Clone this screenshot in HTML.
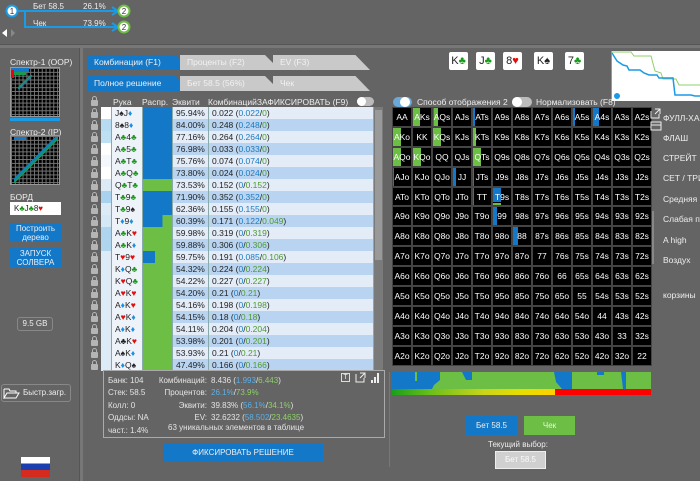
<!DOCTYPE html>
<html><head><meta charset="utf-8"><style>
*{margin:0;padding:0;box-sizing:border-box}
body{width:700px;height:481px;background:#646464;font-family:"Liberation Sans","DejaVu Sans",sans-serif;position:relative;overflow:hidden;color:#eee}
.a{position:absolute}
.t{font-size:8px;white-space:nowrap}
.row{position:absolute;left:89px;width:285px;height:12px;font-size:8.5px;color:#222}
.row>div{position:absolute;top:0;height:12px;border-right:1px solid #8aa;line-height:12px}
.l{left:0;width:12px;background:#646464;border-right:none!important}
.l::after{content:"";position:absolute;left:2px;top:5px;width:7px;height:6px;background:#b5b5b5;border-radius:1px}
.l::before{content:"";position:absolute;left:3px;top:1px;width:5px;height:6px;border:1px solid #b5b5b5;border-radius:3px 3px 0 0;box-sizing:border-box}
.c{left:12px;width:11px}
.h{left:23px;width:31px;padding-left:3px;background:#eef3fa}
.d{left:54px;width:30px}
.e{left:84px;width:36px;padding-left:3px}
.k{left:120px;width:165px;padding-left:3px}
.b{color:#1b7bc4}.g{color:#4d9a2c}.r{color:#e01010}.s{color:#222}.cl{color:#1a9a1a}.dm{color:#1b8fe0}
.grid{position:absolute;left:392px;top:107px;width:260px;height:259px;display:grid;grid-template-columns:repeat(13,20px);grid-template-rows:repeat(13,19.9px);background:#555}
.grid div{background:#000;border:1px solid #444;color:#fff;font-size:8.5px;line-height:18px;text-align:center;position:relative}
.grid i{position:absolute;top:0;bottom:0;left:0}
.grid span{position:relative}
.gb{background:#1478c8}.gg{background:#6cbf44}
.card{position:absolute;top:52px;width:19px;height:18px;background:#fff;border-radius:2px;font-size:11px;color:#222;line-height:18px;text-align:center}
.rl{position:absolute;left:663px;font-size:8.5px;color:#eee;white-space:nowrap}
</style></head><body>
<svg class="a" style="left:0;top:0" width="140" height="40">
<path d="M18 11 H116 M25 11 V27 H116" stroke="#1b9ae6" stroke-width="2" fill="none"/>
<path d="M112 7 L118 11 L112 15 M112 23 L118 27 L112 31" stroke="#1b9ae6" stroke-width="2" fill="none"/>
<circle cx="12" cy="11" r="5.5" fill="#fff" stroke="#1b9ae6" stroke-width="2"/>
<circle cx="124" cy="11" r="5.5" fill="#fff" stroke="#6cbf44" stroke-width="2"/>
<circle cx="124" cy="27" r="5.5" fill="#fff" stroke="#6cbf44" stroke-width="2"/>
<text x="12" y="14" font-size="8" text-anchor="middle" fill="#333">1</text>
<text x="124" y="14" font-size="8" text-anchor="middle" fill="#333">2</text>
<text x="124" y="30" font-size="8" text-anchor="middle" fill="#333">2</text>
<path d="M2 33 L7 29 V37 Z" fill="#fff"/><path d="M11 29 L15 33 L11 37Z" fill="#888"/>
</svg>
<div class="a t" style="left:33px;top:2px">Бет 58.5</div><div class="a t" style="left:83px;top:2px">26.1%</div>
<div class="a t" style="left:33px;top:19px">Чек</div><div class="a t" style="left:83px;top:19px">73.9%</div>
<div class="a" style="left:0;top:44px;width:700px;height:4px;background:#777;border-top:1px solid #555"></div>
<div class="a" style="left:79px;top:48px;width:4px;height:433px;background:#777;border-left:1px solid #555"></div>
<div class="a t" style="left:10px;top:57px;font-size:8.5px">Спектр-1 (OOP)</div>
<div class="a" style="left:10px;top:67px;width:50px;height:50px;background:#000;background-image:linear-gradient(#777 1px,transparent 1px),linear-gradient(90deg,#777 1px,transparent 1px);background-size:3.85px 3.85px;border:1px solid #999"></div>
<div class="a" style="left:11px;top:68px;width:18px;height:4px;background:#1478c8"></div><div class="a" style="left:11px;top:70px;width:3px;height:8px;background:#e01"></div><div class="a" style="left:14px;top:72px;width:12px;height:3px;background:#1a9a4a"></div>
<div class="a" style="left:18px;top:75px;width:14px;height:14px;background:linear-gradient(135deg,transparent 44%,#1a9a4a 44%,#1478c8 56%,transparent 56%)"></div>
<div class="a" style="left:10px;top:118px;width:50px;height:3px;background:#1b9ae6"></div>
<div class="a t" style="left:10px;top:127px;font-size:8.5px">Спектр-2 (IP)</div>
<div class="a" style="left:10px;top:135px;width:50px;height:50px;background:#000;background-image:linear-gradient(#777 1px,transparent 1px),linear-gradient(90deg,#777 1px,transparent 1px);background-size:3.85px 3.85px;border:1px solid #999"></div>
<div class="a" style="left:14px;top:137px;width:44px;height:46px;background:linear-gradient(135deg,transparent 46%,#1478c8 46%,#1a9a4a 52%,transparent 52%)"></div>
<div class="a" style="left:14px;top:137px;width:12px;height:3px;background:#1478c8"></div>
<div class="a t" style="left:10px;top:192px;font-size:8.5px">БОРД</div>
<div class="a" style="left:10px;top:202px;width:51px;height:13px;background:#fff;color:#222;font-size:8px;line-height:13px;padding-left:4px">K<span class="cl">♣</span>J<span class="cl">♣</span>8<span class="r">♥</span></div>
<div class="a" style="left:10px;top:223px;width:51px;height:19px;background:#1478c8;font-size:8px;text-align:center;line-height:9px;padding-top:1px">Построить дерево</div>
<div class="a" style="left:10px;top:248px;width:51px;height:19px;background:#1478c8;font-size:8px;text-align:center;line-height:9px;padding-top:1px">ЗАПУСК СОЛВЕРА</div>
<div class="a" style="left:17px;top:317px;width:36px;height:14px;border:1px solid #888;border-radius:3px;font-size:8px;text-align:center;line-height:12px">9.5 GB</div>
<div class="a" style="left:1px;top:384px;width:70px;height:18px;border:1px solid #888;border-radius:3px;font-size:8px;line-height:16px;padding-left:21px">Быстр.загр.</div>
<svg class="a" style="left:3px;top:387px" width="17" height="12"><path d="M1 2 H6 L7 4 H13 V6 M1 2 V11 L4 6 H16 L13 11 H1" stroke="#fff" fill="none"/></svg>
<div class="a" style="left:21px;top:457px;width:29px;height:20px;background:linear-gradient(#fff 33%,#1c3fb0 33%,#1c3fb0 66%,#d52b1e 66%)"></div>
<div class="a t" style="left:88px;top:55px;width:100px;height:15px;background:#1478c8;clip-path:polygon(0 0,88% 0,100% 100%,0 100%);font-size:8.5px;line-height:15px;padding-left:6px">Комбинации (F1)</div>
<div class="a t" style="left:180px;top:55px;width:100px;height:15px;background:#c9c9c9;clip-path:polygon(0 0,85% 0,100% 100%,0 100%);font-size:8.5px;line-height:15px;padding-left:7px;color:#f2f2f2">Проценты (F2)</div>
<div class="a t" style="left:273px;top:55px;width:97px;height:15px;background:#c9c9c9;clip-path:polygon(0 0,85% 0,100% 100%,0 100%);font-size:8.5px;line-height:15px;padding-left:7px;color:#f2f2f2">EV (F3)</div>
<div class="a t" style="left:88px;top:76px;width:100px;height:15px;background:#1478c8;clip-path:polygon(0 0,88% 0,100% 100%,0 100%);font-size:8.5px;line-height:15px;padding-left:6px">Полное решение</div>
<div class="a t" style="left:180px;top:76px;width:100px;height:15px;background:#c9c9c9;clip-path:polygon(0 0,85% 0,100% 100%,0 100%);font-size:8.5px;line-height:15px;padding-left:7px;color:#f2f2f2">Бет 58.5 (56%)</div>
<div class="a t" style="left:273px;top:76px;width:97px;height:15px;background:#c9c9c9;clip-path:polygon(0 0,85% 0,100% 100%,0 100%);font-size:8.5px;line-height:15px;padding-left:7px;color:#f2f2f2">Чек</div>
<div class="a t" style="left:113px;top:97px;font-size:8.5px">Рука</div>
<div class="a t" style="left:142px;top:97px;font-size:8.5px">Распр.</div>
<div class="a t" style="left:172px;top:97px;font-size:8.5px">Эквити</div>
<div class="a t" style="left:208px;top:97px;font-size:8.5px">КомбинацийЗАФИКСИРОВАТЬ (F9)</div>
<div class="a" style="left:357px;top:97px;width:17px;height:9px;border-radius:5px;background:#bbb"></div><div class="a" style="left:357px;top:97px;width:9px;height:9px;border-radius:5px;background:#fff"></div>
<div class="row" style="top:95px;width:12px"><div class="l"></div></div>
<div class="a" style="left:374px;top:107px;width:9px;height:264px;background:#7a7a7a"></div>
<div class="a" style="left:375px;top:110px;width:7px;height:150px;background:#999"></div>
<div class="row" style="top:107px"><div class="l"></div><div class="c" style="background:#fff"></div><div class="h">J<span class="s">♠</span>J<span class="dm">♦</span></div><div class="d gb"></div><div class="e" style="background:#e3ecf7">95.94%</div><div class="k" style="background:#e3ecf7">0.022 (<span class="b">0.022</span>/<span class="g">0</span>)</div></div>
<div class="row" style="top:119px"><div class="l"></div><div class="c" style="background:#b7dbf0"></div><div class="h">8<span class="s">♠</span>8<span class="dm">♦</span></div><div class="d gb"></div><div class="e" style="background:#b9d4f0">84.00%</div><div class="k" style="background:#b9d4f0">0.248 (<span class="b">0.248</span>/<span class="g">0</span>)</div></div>
<div class="row" style="top:131px"><div class="l"></div><div class="c" style="background:#bfe0f2"></div><div class="h">A<span class="cl">♣</span>4<span class="cl">♣</span></div><div class="d gb"></div><div class="e" style="background:#e3ecf7">77.16%</div><div class="k" style="background:#e3ecf7">0.264 (<span class="b">0.264</span>/<span class="g">0</span>)</div></div>
<div class="row" style="top:143px"><div class="l"></div><div class="c" style="background:#fff"></div><div class="h">A<span class="cl">♣</span>5<span class="cl">♣</span></div><div class="d gb"></div><div class="e" style="background:#b9d4f0">76.98%</div><div class="k" style="background:#b9d4f0">0.033 (<span class="b">0.033</span>/<span class="g">0</span>)</div></div>
<div class="row" style="top:155px"><div class="l"></div><div class="c" style="background:#f4f8fc"></div><div class="h">A<span class="cl">♣</span>T<span class="cl">♣</span></div><div class="d gb"></div><div class="e" style="background:#e3ecf7">75.76%</div><div class="k" style="background:#e3ecf7">0.074 (<span class="b">0.074</span>/<span class="g">0</span>)</div></div>
<div class="row" style="top:167px"><div class="l"></div><div class="c" style="background:#fff"></div><div class="h">A<span class="cl">♣</span>Q<span class="cl">♣</span></div><div class="d gb"></div><div class="e" style="background:#b9d4f0">73.80%</div><div class="k" style="background:#b9d4f0">0.024 (<span class="b">0.024</span>/<span class="g">0</span>)</div></div>
<div class="row" style="top:179px"><div class="l"></div><div class="c" style="background:#dcebf6"></div><div class="h">Q<span class="cl">♣</span>T<span class="cl">♣</span></div><div class="d gg"></div><div class="e" style="background:#e3ecf7">73.53%</div><div class="k" style="background:#e3ecf7">0.152 (<span class="b">0</span>/<span class="g">0.152</span>)</div></div>
<div class="row" style="top:191px"><div class="l"></div><div class="c" style="background:#a8d2ee"></div><div class="h">T<span class="cl">♣</span>9<span class="cl">♣</span></div><div class="d gb"></div><div class="e" style="background:#b9d4f0">71.90%</div><div class="k" style="background:#b9d4f0">0.352 (<span class="b">0.352</span>/<span class="g">0</span>)</div></div>
<div class="row" style="top:203px"><div class="l"></div><div class="c" style="background:#dcebf6"></div><div class="h">T<span class="cl">♣</span>9<span class="s">♠</span></div><div class="d gb"></div><div class="e" style="background:#e3ecf7">62.36%</div><div class="k" style="background:#e3ecf7">0.155 (<span class="b">0.155</span>/<span class="g">0</span>)</div></div>
<div class="row" style="top:215px"><div class="l"></div><div class="c" style="background:#d4e8f5"></div><div class="h">T<span class="dm">♦</span>9<span class="dm">♦</span></div><div class="d" style="background:linear-gradient(90deg,#1478c8 68%,#6cbf44 68%)"></div><div class="e" style="background:#b9d4f0">60.39%</div><div class="k" style="background:#b9d4f0">0.171 (<span class="b">0.122</span>/<span class="g">0.049</span>)</div></div>
<div class="row" style="top:227px"><div class="l"></div><div class="c" style="background:#aed4ef"></div><div class="h">A<span class="cl">♣</span>K<span class="r">♥</span></div><div class="d gg"></div><div class="e" style="background:#e3ecf7">59.98%</div><div class="k" style="background:#e3ecf7">0.319 (<span class="b">0</span>/<span class="g">0.319</span>)</div></div>
<div class="row" style="top:239px"><div class="l"></div><div class="c" style="background:#b0d5ef"></div><div class="h">A<span class="cl">♣</span>K<span class="dm">♦</span></div><div class="d gg"></div><div class="e" style="background:#b9d4f0">59.88%</div><div class="k" style="background:#b9d4f0">0.306 (<span class="b">0</span>/<span class="g">0.306</span>)</div></div>
<div class="row" style="top:251px"><div class="l"></div><div class="c" style="background:#dcebf6"></div><div class="h">T<span class="r">♥</span>9<span class="r">♥</span></div><div class="d" style="background:linear-gradient(90deg,#1478c8 42%,#6cbf44 42%)"></div><div class="e" style="background:#e3ecf7">59.75%</div><div class="k" style="background:#e3ecf7">0.191 (<span class="b">0.085</span>/<span class="g">0.106</span>)</div></div>
<div class="row" style="top:263px"><div class="l"></div><div class="c" style="background:#dcebf6"></div><div class="h">K<span class="dm">♦</span>Q<span class="cl">♣</span></div><div class="d gg"></div><div class="e" style="background:#b9d4f0">54.32%</div><div class="k" style="background:#b9d4f0">0.224 (<span class="b">0</span>/<span class="g">0.224</span>)</div></div>
<div class="row" style="top:275px"><div class="l"></div><div class="c" style="background:#dcebf6"></div><div class="h">K<span class="r">♥</span>Q<span class="cl">♣</span></div><div class="d gg"></div><div class="e" style="background:#e3ecf7">54.22%</div><div class="k" style="background:#e3ecf7">0.227 (<span class="b">0</span>/<span class="g">0.227</span>)</div></div>
<div class="row" style="top:287px"><div class="l"></div><div class="c" style="background:#dcebf6"></div><div class="h">A<span class="r">♥</span>K<span class="r">♥</span></div><div class="d gg"></div><div class="e" style="background:#b9d4f0">54.20%</div><div class="k" style="background:#b9d4f0">0.21 (<span class="b">0</span>/<span class="g">0.21</span>)</div></div>
<div class="row" style="top:299px"><div class="l"></div><div class="c" style="background:#dcebf6"></div><div class="h">A<span class="dm">♦</span>K<span class="r">♥</span></div><div class="d gg"></div><div class="e" style="background:#e3ecf7">54.16%</div><div class="k" style="background:#e3ecf7">0.198 (<span class="b">0</span>/<span class="g">0.198</span>)</div></div>
<div class="row" style="top:311px"><div class="l"></div><div class="c" style="background:#dcebf6"></div><div class="h">A<span class="r">♥</span>K<span class="dm">♦</span></div><div class="d gg"></div><div class="e" style="background:#b9d4f0">54.15%</div><div class="k" style="background:#b9d4f0">0.18 (<span class="b">0</span>/<span class="g">0.18</span>)</div></div>
<div class="row" style="top:323px"><div class="l"></div><div class="c" style="background:#dcebf6"></div><div class="h">A<span class="dm">♦</span>K<span class="dm">♦</span></div><div class="d gg"></div><div class="e" style="background:#e3ecf7">54.11%</div><div class="k" style="background:#e3ecf7">0.204 (<span class="b">0</span>/<span class="g">0.204</span>)</div></div>
<div class="row" style="top:335px"><div class="l"></div><div class="c" style="background:#dcebf6"></div><div class="h">A<span class="s">♣</span>K<span class="r">♥</span></div><div class="d gg"></div><div class="e" style="background:#b9d4f0">53.98%</div><div class="k" style="background:#b9d4f0">0.201 (<span class="b">0</span>/<span class="g">0.201</span>)</div></div>
<div class="row" style="top:347px"><div class="l"></div><div class="c" style="background:#dcebf6"></div><div class="h">A<span class="s">♠</span>K<span class="dm">♦</span></div><div class="d gg"></div><div class="e" style="background:#e3ecf7">53.93%</div><div class="k" style="background:#e3ecf7">0.21 (<span class="b">0</span>/<span class="g">0.21</span>)</div></div>
<div class="row" style="top:359px"><div class="l"></div><div class="c" style="background:#dcebf6"></div><div class="h">K<span class="dm">♦</span>Q<span class="s">♠</span></div><div class="d gg"></div><div class="e" style="background:#b9d4f0">47.49%</div><div class="k" style="background:#b9d4f0">0.166 (<span class="b">0</span>/<span class="g">0.166</span>)</div></div>
<div class="a" style="left:103px;top:370px;width:282px;height:68px;border:1px solid #aaa;background:#646464"></div>
<div class="a t" style="left:108px;top:375px;line-height:12.4px;color:#e4e4e4">Банк: 104<br>Стек: 58.5<br>Колл: 0<br>Оддсы: NA<br>част.: 1.4%</div>
<div class="a t" style="left:150px;top:375px;line-height:12.4px;color:#e4e4e4;width:57px;text-align:right">Комбинаций:<br>Процентов:<br>Эквити:<br>EV:</div>
<div class="a t" style="left:211px;top:375px;line-height:12.4px;color:#e4e4e4">8.436 (<span style="color:#5ab0e8">1.993</span>/<span style="color:#8fcf6a">6.443</span>)<br><span style="color:#5ab0e8">26.1%</span>/<span style="color:#8fcf6a">73.9%</span><br>39.83% (<span style="color:#5ab0e8">56.1%</span>/<span style="color:#8fcf6a">34.1%</span>)<br>32.6232 (<span style="color:#5ab0e8">58.502</span>/<span style="color:#8fcf6a">23.4635</span>)</div>
<div class="a t" style="left:168px;top:423px;color:#e4e4e4">63 уникальных элементов в таблице</div>
<div class="a" style="left:341px;top:373px;width:9px;height:9px;border:1px solid #ddd;font-size:7px;text-align:center;line-height:7px">T</div>
<svg class="a" style="left:355px;top:372px" width="28" height="11"><path d="M1 2 V10 H9 V6 M5 1 H10 V6 M10 1 L5 6" stroke="#eee" fill="none"/><rect x="16" y="8" width="2" height="3" fill="#eee"/><rect x="19" y="5" width="2" height="6" fill="#eee"/><rect x="22" y="1" width="2" height="10" fill="#eee"/></svg>
<div class="a" style="left:163px;top:443px;width:160px;height:19px;background:#1478c8;font-size:8px;text-align:center;line-height:19px">ФИКСИРОВАТЬ РЕШЕНИЕ</div>
<div class="card" style="left:449px">K<span class="cl">♣</span></div>
<div class="card" style="left:476px">J<span class="cl">♣</span></div>
<div class="card" style="left:503px">8<span class="r">♥</span></div>
<div class="card" style="left:534px">K<span class="s">♠</span></div>
<div class="card" style="left:565px">7<span class="cl">♣</span></div>
<div class="a" style="left:611px;top:51px;width:89px;height:50px;background:#fff;border-left:1px solid #999"></div>
<svg class="a" style="left:611px;top:51px" width="89" height="50"><path d="M1 1 H20 L23 5 H40 L44 20 L50 22 L52 28 H65 L68 34 H89" stroke="#8fcf6a" fill="none"/><path d="M1 2 L6 10 L12 14 L16 15 L18 19 L29 19 L33 22 L38 24 H46 L48 27 H62 L64 44 H80 L84 45 H89" stroke="#1b9ae6" stroke-width="1.5" fill="none"/><circle cx="6" cy="45" r="3" fill="#1b9ae6"/></svg>
<div class="a" style="left:393px;top:97px;width:19px;height:10px;border-radius:5px;background:#6aa8d8"></div><div class="a" style="left:400px;top:97px;width:10px;height:10px;border-radius:5px;background:#fff"></div>
<div class="a t" style="left:417px;top:97px;font-size:8.5px">Способ отображения 2</div>
<div class="a" style="left:512px;top:97px;width:20px;height:10px;border-radius:5px;background:#bbb"></div><div class="a" style="left:512px;top:97px;width:10px;height:10px;border-radius:5px;background:#fff"></div>
<div class="a t" style="left:536px;top:97px;font-size:8.5px">Нормализовать (F8)</div>
<div class="grid">
<div><span>AA</span></div><div><i class="gg" style="width:7px"></i><span>AKs</span></div><div><i class="gg" style="width:5px"></i><i class="gb" style="width:1px"></i><span>AQs</span></div><div><span>AJs</span></div><div><i class="gb" style="width:2px"></i><span>ATs</span></div><div><span>A9s</span></div><div><span>A8s</span></div><div><span>A7s</span></div><div><span>A6s</span></div><div><i class="gb" style="width:2px"></i><span>A5s</span></div><div><i class="gb" style="width:6px"></i><span>A4s</span></div><div><span>A3s</span></div><div><span>A2s</span></div>
<div><i class="gg" style="width:8px"></i><span>AKo</span></div><div><span>KK</span></div><div><i class="gg" style="width:8px"></i><span>KQs</span></div><div><span>KJs</span></div><div><i class="gg" style="width:3px"></i><span>KTs</span></div><div><span>K9s</span></div><div><span>K8s</span></div><div><span>K7s</span></div><div><span>K6s</span></div><div><span>K5s</span></div><div><span>K4s</span></div><div><span>K3s</span></div><div><span>K2s</span></div>
<div><i class="gg" style="width:8px"></i><span>AQo</span></div><div><i class="gg" style="width:8px"></i><span>KQo</span></div><div><span>QQ</span></div><div><span>QJs</span></div><div><i class="gg" style="width:8px"></i><span>QTs</span></div><div><span>Q9s</span></div><div><span>Q8s</span></div><div><span>Q7s</span></div><div><span>Q6s</span></div><div><span>Q5s</span></div><div><span>Q4s</span></div><div><span>Q3s</span></div><div><span>Q2s</span></div>
<div><i class="gb" style="width:1px"></i><span>AJo</span></div><div><span>KJo</span></div><div><span>QJo</span></div><div><i class="gb" style="width:3px"></i><span>JJ</span></div><div><i class="gb" style="width:1px"></i><span>JTs</span></div><div><span>J9s</span></div><div><span>J8s</span></div><div><span>J7s</span></div><div><span>J6s</span></div><div><span>J5s</span></div><div><span>J4s</span></div><div><span>J3s</span></div><div><span>J2s</span></div>
<div><span>ATo</span></div><div><span>KTo</span></div><div><span>QTo</span></div><div><span>JTo</span></div><div><i class="gb" style="width:1px"></i><span>TT</span></div><div><i class="gb" style="width:8px;bottom:3px"></i><i class="gg" style="width:8px;top:15px"></i><span>T9s</span></div><div><span>T8s</span></div><div><span>T7s</span></div><div><span>T6s</span></div><div><span>T5s</span></div><div><span>T4s</span></div><div><span>T3s</span></div><div><span>T2s</span></div>
<div><span>A9o</span></div><div><span>K9o</span></div><div><span>Q9o</span></div><div><span>J9o</span></div><div><span>T9o</span></div><div><i class="gb" style="width:4px"></i><span>99</span></div><div><span>98s</span></div><div><span>97s</span></div><div><span>96s</span></div><div><span>95s</span></div><div><span>94s</span></div><div><span>93s</span></div><div><span>92s</span></div>
<div><span>A8o</span></div><div><span>K8o</span></div><div><span>Q8o</span></div><div><span>J8o</span></div><div><span>T8o</span></div><div><span>98o</span></div><div><i class="gb" style="width:5px"></i><span>88</span></div><div><span>87s</span></div><div><span>86s</span></div><div><span>85s</span></div><div><span>84s</span></div><div><span>83s</span></div><div><span>82s</span></div>
<div><span>A7o</span></div><div><span>K7o</span></div><div><span>Q7o</span></div><div><span>J7o</span></div><div><span>T7o</span></div><div><span>97o</span></div><div><span>87o</span></div><div><span>77</span></div><div><span>76s</span></div><div><span>75s</span></div><div><span>74s</span></div><div><span>73s</span></div><div><span>72s</span></div>
<div><span>A6o</span></div><div><span>K6o</span></div><div><span>Q6o</span></div><div><span>J6o</span></div><div><span>T6o</span></div><div><span>96o</span></div><div><span>86o</span></div><div><span>76o</span></div><div><span>66</span></div><div><span>65s</span></div><div><span>64s</span></div><div><span>63s</span></div><div><span>62s</span></div>
<div><span>A5o</span></div><div><span>K5o</span></div><div><span>Q5o</span></div><div><span>J5o</span></div><div><span>T5o</span></div><div><span>95o</span></div><div><span>85o</span></div><div><span>75o</span></div><div><span>65o</span></div><div><span>55</span></div><div><span>54s</span></div><div><span>53s</span></div><div><span>52s</span></div>
<div><span>A4o</span></div><div><span>K4o</span></div><div><span>Q4o</span></div><div><span>J4o</span></div><div><span>T4o</span></div><div><span>94o</span></div><div><span>84o</span></div><div><span>74o</span></div><div><span>64o</span></div><div><span>54o</span></div><div><span>44</span></div><div><span>43s</span></div><div><span>42s</span></div>
<div><span>A3o</span></div><div><span>K3o</span></div><div><span>Q3o</span></div><div><span>J3o</span></div><div><span>T3o</span></div><div><span>93o</span></div><div><span>83o</span></div><div><span>73o</span></div><div><span>63o</span></div><div><span>53o</span></div><div><span>43o</span></div><div><span>33</span></div><div><span>32s</span></div>
<div><span>A2o</span></div><div><span>K2o</span></div><div><span>Q2o</span></div><div><span>J2o</span></div><div><span>T2o</span></div><div><span>92o</span></div><div><span>82o</span></div><div><span>72o</span></div><div><span>62o</span></div><div><span>52o</span></div><div><span>42o</span></div><div><span>32o</span></div><div><span>22</span></div>
</div>
<div class="a" style="left:392px;top:372px;width:259px;height:17px;background:#6cbf44"></div>
<svg class="a" style="left:392px;top:372px" width="259" height="17"><path d="M0 0 H23 V9 H25 V0 H48 V8 L42 13 L40 17 H0 Z" fill="#1478c8"/><path d="M70 0 H80 V8 H74 Z" fill="#1478c8"/><path d="M162 0 H180 V17 H170 L164 10 Z" fill="#1478c8"/><path d="M205 0 H212 V3 H205Z M229 0 H234 V17 H231 Z" fill="#1478c8"/></svg>
<div class="a" style="left:392px;top:389px;width:259px;height:6px;background:linear-gradient(90deg,#1aa01a 0%,#6cbf1a 15%,#c8d41a 35%,#e8dc00 50%,#ffd000 63%,#ff0000 63%,#ff0000 100%)"></div>
<div class="a" style="left:389px;top:372px;width:1px;height:95px;background:#777"></div>
<svg class="a" style="left:650px;top:108px" width="12" height="24"><path d="M1 3 V10 H9 V6 M5 1 H10 V6 M10 1 L5 6" stroke="#eee" fill="none"/><rect x="1" y="14" width="10" height="8" fill="none" stroke="#eee"/><line x1="1" y1="17" x2="11" y2="17" stroke="#eee"/></svg>
<div class="rl" style="top:113px">ФУЛЛ-ХА</div>
<div class="rl" style="top:133px">ФЛАШ</div>
<div class="rl" style="top:153px">СТРЕЙТ</div>
<div class="rl" style="top:173px">СЕТ / ТРИ</div>
<div class="rl" style="top:194px">Средняя</div>
<div class="rl" style="top:214px">Слабая п</div>
<div class="rl" style="top:235px">A high</div>
<div class="rl" style="top:255px">Воздух</div>
<div class="rl" style="top:290px">корзины</div>
<div class="a" style="left:652px;top:211px;width:2px;height:53px;background:#888"></div>
<div class="a" style="left:466px;top:416px;width:51px;height:19px;background:#1478c8;font-size:8px;text-align:center;line-height:19px">Бет 58.5</div>
<div class="a" style="left:524px;top:416px;width:51px;height:19px;background:#6cbf44;font-size:8px;text-align:center;line-height:19px">Чек</div>
<div class="a t" style="left:488px;top:440px;font-size:8px">Текущий выбор:</div>
<div class="a" style="left:495px;top:451px;width:51px;height:18px;background:#d0d0d0;border:1px solid #eee;font-size:8px;text-align:center;line-height:16px;color:#fafafa">Бет 58.5</div>
</body></html>
